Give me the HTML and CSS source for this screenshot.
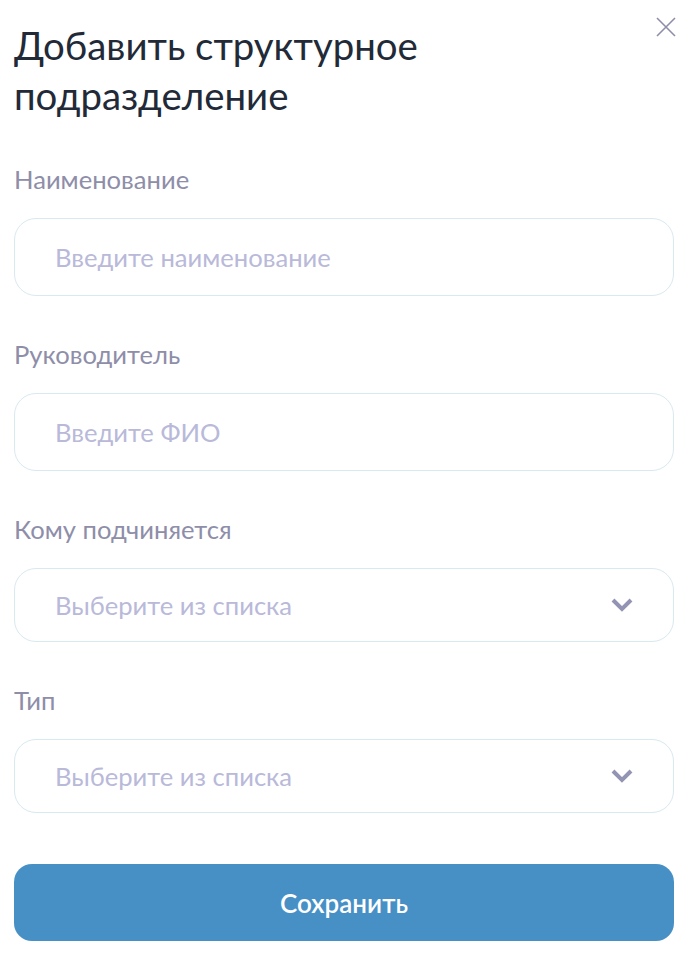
FILE: index.html
```html
<!DOCTYPE html>
<html lang="ru">
<head>
    <meta charset="UTF-8">
    <meta name="viewport" content="width=device-width, initial-scale=1.0">
    <title>Добавить структурное подразделение</title>
    <link rel="stylesheet" href="styles.css">
</head>
<body>
    <div class="modal">
        <button class="close-btn" aria-label="Закрыть">
            <svg width="20" height="20" viewBox="0 0 20 20"><path d="M1 1 L19 19 M19 1 L1 19" stroke="currentColor" stroke-width="1.6" fill="none"/></svg>
        </button>
        <h1 class="modal-title">Добавить структурное подразделение</h1>

        <form class="form">
            <div class="field">
                <label class="field-label" for="name">Наименование</label>
                <input class="field-input" id="name" type="text" placeholder="Введите наименование">
            </div>
            <div class="field">
                <label class="field-label" for="head">Руководитель</label>
                <input class="field-input" id="head" type="text" placeholder="Введите ФИО">
            </div>
            <div class="field">
                <label class="field-label">Кому подчиняется</label>
                <div class="field-select">
                    <span class="placeholder">Выберите из списка</span>
                    <svg class="chevron" width="24" height="18" viewBox="0 0 24 18"><path d="M3 4 L12 13 L21 4" stroke="currentColor" stroke-width="4" fill="none"/></svg>
                </div>
            </div>
            <div class="field">
                <label class="field-label">Тип</label>
                <div class="field-select">
                    <span class="placeholder">Выберите из списка</span>
                    <svg class="chevron" width="24" height="18" viewBox="0 0 24 18"><path d="M3 4 L12 13 L21 4" stroke="currentColor" stroke-width="4" fill="none"/></svg>
                </div>
            </div>
            <button type="button" class="submit-btn">Сохранить</button>
        </form>
    </div>
</body>
</html>
```

FILE: styles.css
```css
body {
    margin: 0;
    background: #ffffff;
    font-family: Lato, "Noto Sans", sans-serif;
}
.modal {
    position: relative;
    padding: 20px 20px 24px 14px;
}
.close-btn {
    position: absolute;
    top: 17px;
    right: 18px;
    padding: 0;
    border: none;
    background: none;
    color: #8e8eaa;
    cursor: pointer;
    line-height: 0;
}
.modal-title {
    margin: 0;
    width: 480px;
    font-size: 38.4px;
    line-height: 50px;
    font-weight: 400;
    color: #222a38;
}
.form {
    display: flex;
    flex-direction: column;
    gap: 43px;
    margin-top: 44px;
}
.field {
    display: flex;
    flex-direction: column;
    gap: 24px;
}
.field-label {
    font-size: 25.6px;
    line-height: 30px;
    color: #8e8ea9;
}
.field-input,
.field-select {
    box-sizing: border-box;
    width: 100%;
    border: 1px solid #d9e9f0;
    border-radius: 22px;
    background: #fff;
    padding: 0 40px;
    font-family: inherit;
    font-size: 25.6px;
    color: #222a38;
}
.field-input {
    height: 78px;
    outline: none;
}
.field-input::placeholder,
.placeholder {
    color: #b9b9d9;
}
.field-select {
    height: 74px;
    display: flex;
    align-items: center;
    justify-content: space-between;
    padding-right: 39px;
}
.chevron {
    color: #9393b3;
}
.submit-btn {
    margin-top: 8px;
    height: 77px;
    border: none;
    border-radius: 18px;
    background: #4790c6;
    color: #ffffff;
    font-family: inherit;
    font-size: 26px;
    font-weight: 600;
    cursor: pointer;
}
```
